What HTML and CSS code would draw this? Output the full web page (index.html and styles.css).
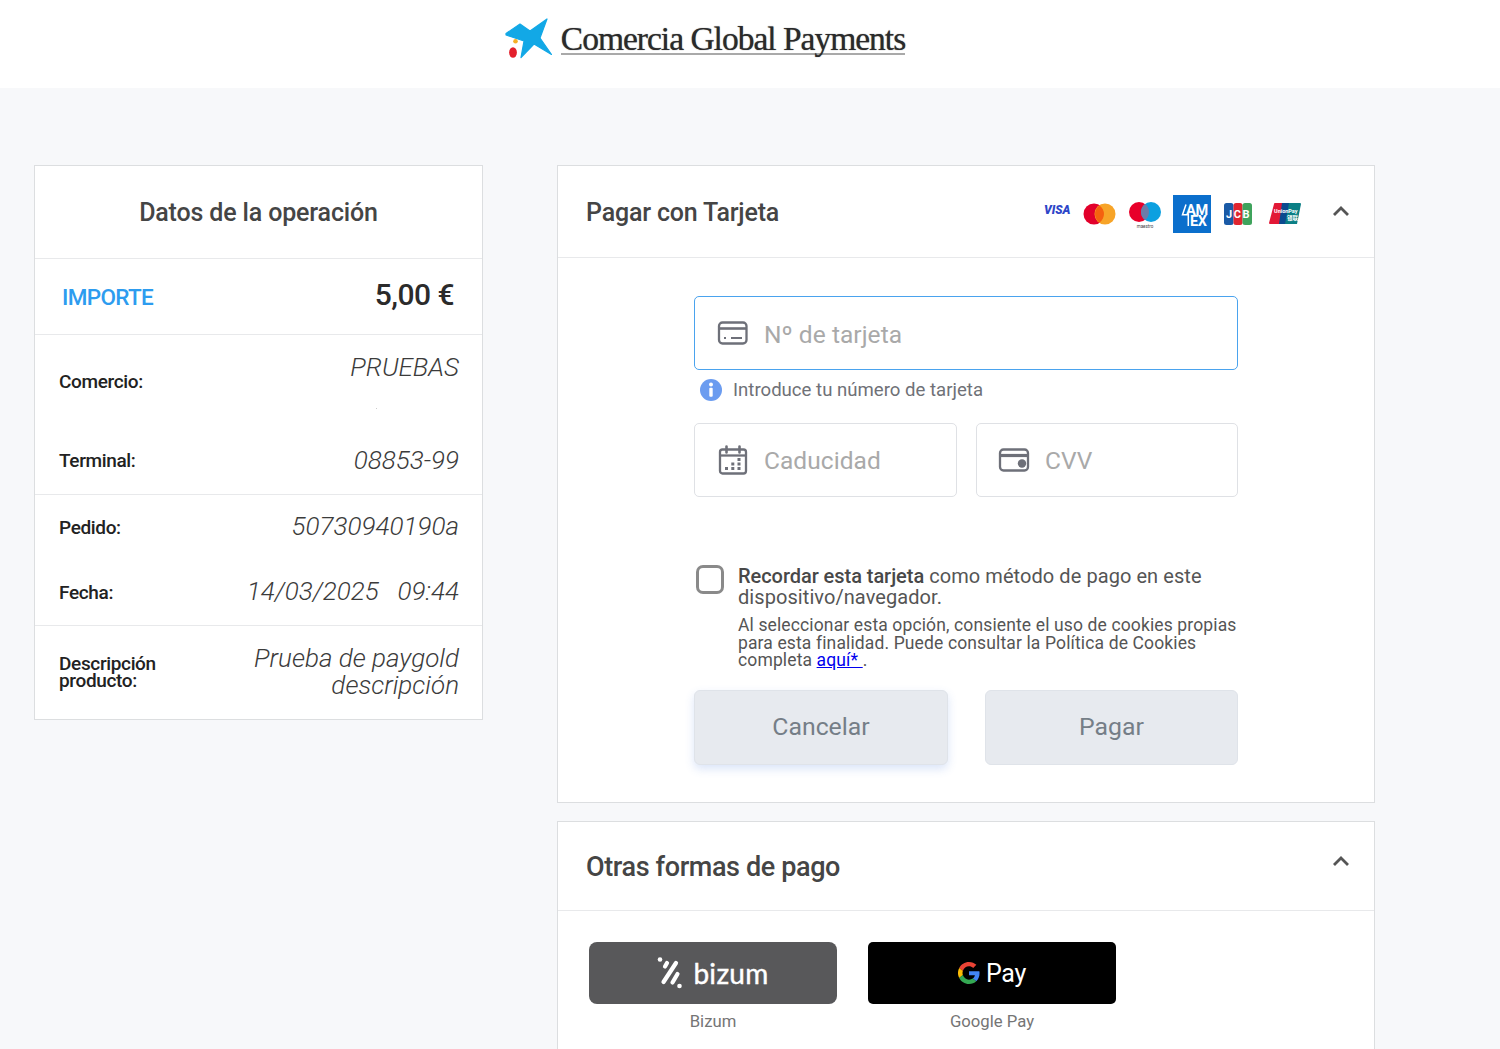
FILE: index.html
```html
<!DOCTYPE html>
<html lang="es">
<head>
<meta charset="utf-8">
<title>Comercia Global Payments</title>
<link rel="stylesheet" href="styles.css">
</head>
<body>
<header class="top">
  <div class="logo">
    <svg class="logo-mark" width="48" height="42" viewBox="0 0 48 42">
      <path fill="#12a8e6" stroke="#12a8e6" stroke-width="1.200" stroke-linejoin="round" d="M1 15.500 15 6 25 13 42 1 35 20 46.500 36.500 29 26 16 39.500 19 23 1 17Z"/>
      <circle cx="10.500" cy="23.300" r="2.300" fill="#f6b027"/>
      <ellipse cx="8" cy="34.500" rx="3.900" ry="5.200" fill="#e3202c"/>
    </svg>
    <span class="logo-text">Comercia Global Payments</span>
  </div>
</header>
<main class="page">
  <section class="card summary">
    <h2 class="summary-title">Datos de la operación</h2>
    <div class="amount-row">
      <span class="amount-label">IMPORTE</span>
      <span class="amount-value">5,00 €</span>
    </div>
    <div class="group group-merchant">
      <div class="row row-merchant">
        <span class="row-label">Comercio:</span>
        <span class="row-value merchant-value">PRUEBAS</span>
        <span class="speck"></span>
      </div>
      <div class="row row-terminal">
        <span class="row-label">Terminal:</span>
        <span class="row-value">08853-99</span>
      </div>
    </div>
    <div class="group group-order">
      <div class="row row-order">
        <span class="row-label">Pedido:</span>
        <span class="row-value">50730940190a</span>
      </div>
      <div class="row row-order">
        <span class="row-label">Fecha:</span>
        <span class="row-value">14/03/2025 &nbsp; 09:44</span>
      </div>
    </div>
    <div class="group group-desc">
      <span class="row-label desc-label">Descripción producto:</span>
      <span class="row-value desc-value">Prueba de paygold descripción</span>
    </div>
  </section>

  <div class="col-right">
    <section class="card pay">
      <div class="card-head">
        <h2 class="card-title">Pagar con Tarjeta</h2>
        <div class="brands">
          <svg class="brand-visa" width="27" height="12" viewBox="0 0 27 12"><text x="0" y="10" class="visa-text">VISA</text></svg>
          <svg class="brand-mc" width="33" height="22" viewBox="0 0 33 22"><circle cx="11" cy="11" r="10.500" fill="#e2002b"/><circle cx="22" cy="11" r="10.500" fill="#f7a428"/><path fill="#f5610f" d="M16.500 2.400a10.500 10.500 0 0 1 0 17.200a10.500 10.500 0 0 1 0-17.200Z"/></svg>
          <svg class="brand-maestro" width="32" height="26" viewBox="0 0 32 26"><circle cx="10" cy="10" r="10" fill="#e8002a"/><circle cx="22" cy="10" r="10" fill="#0ca0e0"/><path fill="#6d7ba8" d="M16 2a10 10 0 0 1 0 16a10 10 0 0 1 0-16Z"/><text x="16" y="25.500" class="maestro-text">maestro</text></svg>
          <svg class="brand-amex" width="38" height="38" viewBox="0 0 38 38"><rect width="38" height="38" fill="#0b6fcc"/><path fill="none" stroke="#fff" stroke-width="1.500" d="M13 9.500 9.500 19.700H15.300V31"/><text x="13" y="19.500" class="amex-text">AM</text><text x="17" y="31" class="amex-text">EX</text></svg>
          <svg class="brand-jcb" width="28" height="22" viewBox="0 0 28 22"><rect x="0" y="0" width="9.500" height="22" rx="2.500" fill="#1a5aa6"/><rect x="9.500" y="0" width="9" height="22" rx="2.500" fill="#e0252f"/><rect x="18.500" y="0" width="9.500" height="22" rx="2.500" fill="#3fa35c"/><text x="14.500" y="15" class="jcb-text">JCB</text></svg>
          <svg class="brand-union" width="32" height="21" viewBox="0 0 32 21"><path fill="#e21836" d="M5 1a1 1 0 0 1 1-1h11l-4 21H1a1 1 0 0 1-1-1Z"/><path fill="#0b4a8f" d="M13 0h9l-4 21h-8Z"/><path fill="#0b7f85" d="M20 0h11a1 1 0 0 1 1 1l-4 20H16Z"/><text x="5" y="10" class="union-text">UnionPay</text><text x="18" y="17" class="union-cjk">银联</text></svg>
        </div>
        <svg class="chevron" width="18" height="12" viewBox="0 0 18 12"><path d="M2 10 9 3l7 7" fill="none" stroke="#555" stroke-width="2.800"/></svg>
      </div>
      <div class="pay-body">
        <div class="field field-focus">
          <svg class="field-icon" width="32" height="26" viewBox="0 0 32 26"><rect x="2" y="2.500" width="27.500" height="21" rx="3.500" fill="none" stroke="#6e7079" stroke-width="2.300"/><path d="M2 8.500h27" stroke="#6e7079" stroke-width="2.600"/><path d="M7 18h2M14 18h11" stroke="#6e7079" stroke-width="1.800"/></svg>
          <span class="placeholder">Nº de tarjeta</span>
        </div>
        <div class="hint">
          <svg width="22" height="22" viewBox="0 0 22 22"><circle cx="11" cy="11" r="11" fill="#6b9cf0"/><circle cx="11" cy="5.500" r="2" fill="#fff"/><rect x="9.300" y="8.800" width="3.400" height="9" rx="1" fill="#fff"/></svg>
          <span>Introduce tu número de tarjeta</span>
        </div>
        <div class="field-pair">
          <div class="field">
            <svg class="field-icon" width="32" height="30" viewBox="0 0 32 30"><rect x="3" y="4.500" width="26" height="24" rx="2.500" fill="none" stroke="#6e7079" stroke-width="2.300"/><path d="M3 10.500h26" stroke="#6e7079" stroke-width="2.300"/><path d="M9.500 1.500v6M22.500 1.500v6" stroke="#6e7079" stroke-width="2.600" stroke-linecap="round"/><path d="M8 23.500h3M14.300 23.500h3M20.500 23.500h3M14.300 19h3M20.500 19h3M20.500 14.500h3" stroke="#6e7079" stroke-width="2.800"/></svg>
            <span class="placeholder">Caducidad</span>
          </div>
          <div class="field field-cvv">
            <svg class="field-icon" width="32" height="26" viewBox="0 0 32 26"><rect x="2" y="2.500" width="28" height="21" rx="3.500" fill="none" stroke="#6e7079" stroke-width="2.300"/><path d="M2 8.500h28" stroke="#6e7079" stroke-width="3.200"/><circle cx="24" cy="16.500" r="4.200" fill="#6e7079"/></svg>
            <span class="placeholder">CVV</span>
          </div>
        </div>
        <div class="remember">
          <span class="checkbox"></span>
          <div class="remember-text">
            <p class="remember-main"><strong>Recordar esta tarjeta</strong> como método de pago en este dispositivo/navegador.</p>
            <p class="remember-note">Al seleccionar esta opción, consiente el uso de cookies propias para esta finalidad. Puede consultar la Política de Cookies completa <a href="#">aquí*&nbsp;</a>.</p>
          </div>
        </div>
        <div class="actions">
          <button class="btn btn-cancel" type="button">Cancelar</button>
          <button class="btn" type="button">Pagar</button>
        </div>
      </div>
    </section>

    <section class="card other">
      <div class="card-head other-head">
        <h2 class="card-title other-title">Otras formas de pago</h2>
        <svg class="chevron other-chevron" width="18" height="12" viewBox="0 0 18 12"><path d="M2 10 9 3l7 7" fill="none" stroke="#555" stroke-width="2.800"/></svg>
      </div>
      <div class="methods">
        <div class="method">
          <div class="method-btn bizum">
            <svg width="26" height="32" viewBox="0 0 26 32"><circle cx="3" cy="2.500" r="2.300" fill="#fff"/><circle cx="22.500" cy="29" r="2.300" fill="#fff"/><path d="M19 6 6.500 25M10 6 8 9.500M20.500 17 15.500 25.500" fill="none" stroke="#fff" stroke-width="4.200" stroke-linecap="round"/></svg>
            <span class="bizum-text">bizum</span>
          </div>
          <span class="method-label">Bizum</span>
        </div>
        <div class="method">
          <div class="method-btn gpay">
            <svg width="22" height="22" viewBox="0 0 48 48"><path fill="#EA4335" d="M24 9.500c3.500 0 6.700 1.200 9.200 3.600l6.900-6.900C35.900 2.400 30.500 0 24 0 14.600 0 6.500 5.400 2.600 13.200l8 6.200C12.500 13.700 17.800 9.500 24 9.500Z"/><path fill="#4285F4" d="M47 24.500c0-1.600-.1-3.100-.4-4.500H24v9h12.900c-.6 3-2.200 5.500-4.800 7.200l7.700 6C44.300 38 47 31.900 47 24.500Z"/><path fill="#FBBC05" d="M10.600 28.600a14.500 14.500 0 0 1 0-9.200l-8-6.200a24 24 0 0 0 0 21.600Z"/><path fill="#34A853" d="M24 48c6.500 0 11.900-2.100 15.800-5.800l-7.700-6c-2.100 1.400-4.900 2.300-8.100 2.300-6.200 0-11.500-4.200-13.400-9.900l-8 6.200C6.500 42.600 14.600 48 24 48Z"/></svg>
            <span class="gpay-text">Pay</span>
          </div>
          <span class="method-label">Google Pay</span>
        </div>
      </div>
    </section>
  </div>
</main>
</body>
</html>
```
FILE: styles.css
```css
* { box-sizing: border-box; }
html, body { margin: 0; height: 100%; overflow: hidden; }
body { background: #f7f8fa; font-family: Roboto, "Liberation Sans", sans-serif; color: #333; }
h2, p { margin: 0; }

.top { height: 88px; background: #fff; display: flex; justify-content: center; padding: 18px 90px 0 0; }
.logo { display: flex; align-items: flex-start; height: 42px; gap: 8px; }
.logo-mark { flex: none; }
.logo-text { font-family: "Liberation Serif", serif; font-size: 33.500px; letter-spacing: -1px; color: #2a2a2a; line-height: 42px; height: 37px; border-bottom: 2.500px solid #a9a9a9; text-shadow: 0 0 1px rgba(0,0,0,.6); }

.page { display: flex; align-items: flex-start; gap: 74px; padding: 77px 0 0 34px; }
.card { background: #fff; border: 1px solid #dcdee0; }

.summary { width: 449px; flex: none; }
.summary-title { height: 93px; border-bottom: 1px solid #e8e9eb; font-size: 25px; font-weight: 500; line-height: 93px; text-align: center; color: #454545; letter-spacing: -.15px; }
.amount-row { height: 76px; border-bottom: 1px solid #e8e9eb; padding: 0 28px 0 27px; display: flex; justify-content: space-between; align-items: center; }
.amount-label { font-size: 22.500px; font-weight: 500; color: #2d9cef; letter-spacing: -.65px; }
.amount-value { font-size: 30px; font-weight: 500; color: #2b2b2b; letter-spacing: -.5px; margin-bottom: 4px; }

.group { border-bottom: 1px solid #e8e9eb; padding: 0 23px 0 24px; }
.group:last-child { border-bottom: 0; }
.row { display: flex; justify-content: space-between; position: relative; }
.row-label { font-size: 19px; font-weight: 500; color: #222; letter-spacing: -.35px; }
.row-value { font-size: 26px; font-style: italic; font-weight: 300; color: #3b3b3b; text-align: right; }
.group-merchant { height: 160px; }
.row-merchant { height: 92px; padding-top: 17px; }
.row-merchant .row-label { margin-top: 18px; }
.merchant-value { line-height: 30px; }
.speck { position: absolute; left: 317px; top: 73px; width: 1px; height: 1px; background: #ccc; }
.row-terminal { height: 67px; align-items: center; }
.row-terminal .row-value { margin-bottom: 2px; }
.group-order { height: 131px; padding-top: 17px; }
.row-order { height: 65px; }
.row-order .row-label { line-height: 32px; }
.row-order .row-value { line-height: 28px; }
.group-desc { height: 93px; display: flex; justify-content: space-between; align-items: center; }
.desc-label { width: 130px; line-height: 17px; margin-bottom: 2px; }
.desc-value { width: 250px; line-height: 27px; margin-bottom: 2px; }

.col-right { width: 818px; flex: none; display: flex; flex-direction: column; gap: 18px; }
.card-head { height: 92px; border-bottom: 1px solid #e8e9eb; padding: 0 24px 0 28px; display: flex; align-items: center; justify-content: space-between; }
.card-title { font-size: 25px; font-weight: 500; color: #454545; letter-spacing: -.18px; padding-top: 2px; }
.brands { display: flex; align-items: center; gap: 12px; margin: 4px 31px 0 auto; }
.chevron { display: block; margin-top: -2px; }
.brand-visa { margin-top: -8px; }
.brand-maestro { margin: 2px 0 0 1px; }
.brand-amex { margin-right: 1px; }
.brand-union { margin-left: 5px; }
.visa-text { font: italic 900 12px Roboto, sans-serif; fill: #2d45c8; }
.maestro-text { font: 400 4.500px Roboto, sans-serif; fill: #444; text-anchor: middle; }
.amex-text { font: 700 14.500px Roboto, sans-serif; fill: #fff; letter-spacing: -.3px; }
.jcb-text { font: 700 11px Roboto, sans-serif; fill: #fff; text-anchor: middle; letter-spacing: 1.500px; }
.union-text { font: 700 5.500px Roboto, sans-serif; fill: #fff; }
.union-cjk { font: 700 5.500px "Noto Sans CJK SC", sans-serif; fill: #fff; }

.pay-body { padding: 38px 136px 37px; }
.field { height: 74px; background: #fff; border: 1px solid #dfe1e5; border-radius: 5px; display: flex; align-items: center; padding-left: 22px; gap: 15px; }
.field-focus { border-color: #4aa3ee; }
.field-cvv { padding-left: 21px; }
.field-icon { flex: none; }
.placeholder { font-size: 24.500px; color: #a9a9a9; letter-spacing: .05px; }
.field-focus .placeholder { padding-top: 2px; }
.hint { height: 22px; margin: 9px 0 22px 6px; display: flex; align-items: center; gap: 11px; font-size: 18.600px; color: #6f7177; }
.hint span { margin-bottom: 1px; }
.field-pair { display: grid; grid-template-columns: 263px 262px; gap: 19px; }
.remember { display: flex; margin: 68px 0 0 2px; gap: 14px; }
.checkbox { flex: none; width: 28px; height: 29px; border: 3px solid #8a8a8a; border-radius: 7px; background: #fff; }
.remember-text { padding-top: 1px; }
.remember-main { font-size: 20px; line-height: 21px; color: #555; width: 490px; letter-spacing: .07px; }
.remember-main strong { font-weight: 500; color: #484848; letter-spacing: -.05px; }
.remember-note { font-size: 17.500px; line-height: 17.500px; color: #555; margin-top: 9px; width: 505px; letter-spacing: .13px; }
.remember-note a { color: #0000ee; }
.actions { display: grid; grid-template-columns: 254px 253px; gap: 37px; margin-top: 20px; }
.btn { height: 75px; padding: 0 0 2px; border: 1px solid #dfe3e9; border-radius: 6px; background: #e7eaef; font: 400 24.800px Roboto, sans-serif; color: #757e87; }
.btn-cancel { box-shadow: 0 4px 10px rgba(70,120,220,.2); }

.other-head { height: 89px; }
.other-title { font-size: 27px; letter-spacing: -.38px; }
.other-chevron { margin-top: -10px; }
.methods { display: flex; gap: 31px; padding: 31px 0 0 31px; height: 200px; }
.method { width: 248px; display: flex; flex-direction: column; align-items: center; }
.method-btn { width: 248px; height: 62px; display: flex; align-items: center; justify-content: center; }
.method-label { margin-top: 8px; font-size: 16.700px; line-height: 20px; color: #757575; }
.bizum { background: #58585a; border-radius: 8px; gap: 10px; }
.bizum-text { font: 400 28px Lato, sans-serif; color: #fff; letter-spacing: .3px; -webkit-text-stroke: .4px #fff; }
.gpay { background: #000; border-radius: 5px; gap: 6px; }
.gpay-text { font: 400 25px Roboto, sans-serif; color: #fff; letter-spacing: -.3px; padding-top: 2px; }
```
